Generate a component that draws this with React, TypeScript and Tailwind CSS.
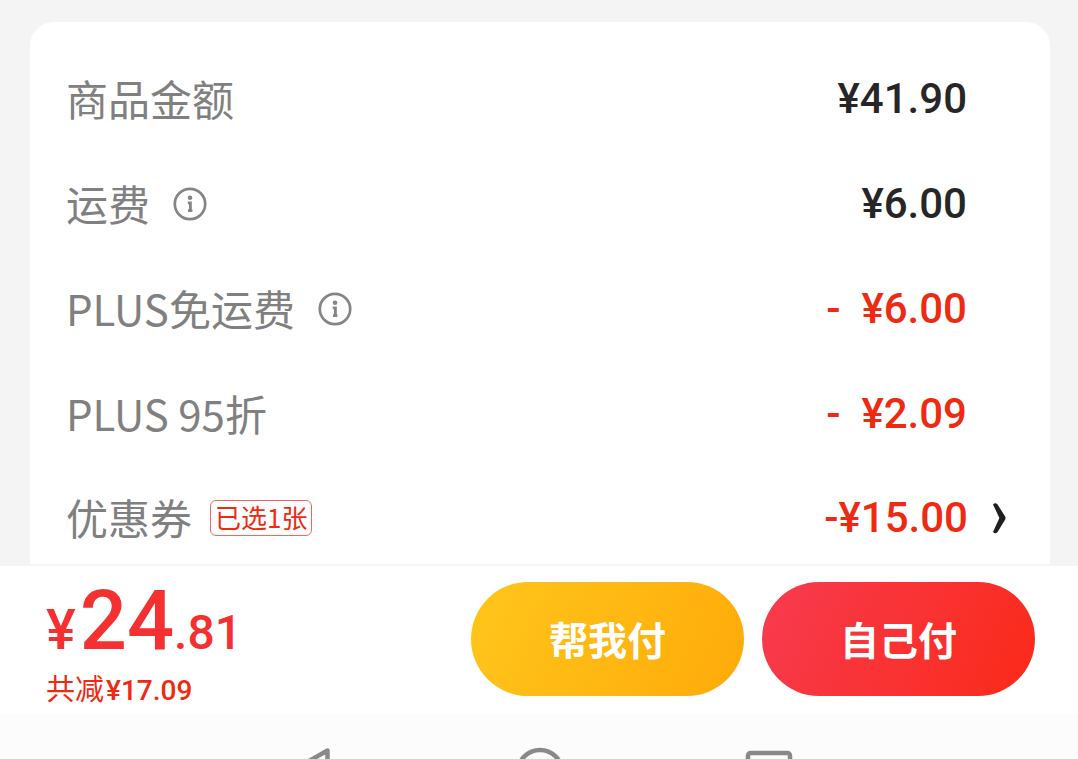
import type { ReactNode } from "react";

function InfoButton({ label }: { label: string }) {
  return (
    <button type="button" aria-label={label} className="ml-[23px] shrink-0">
      <svg viewBox="0 0 34 34" className="size-[34px]" fill="none" stroke="#858585">
        <circle cx="17" cy="17" r="15.2" strokeWidth="2.7" />
        <circle cx="17" cy="10.8" r="2.3" fill="#858585" stroke="none" />
        <path d="M14.8 15.8H17.4V23.4M15 23.6H19.4" strokeWidth="2.8" />
      </svg>
    </button>
  );
}

type RowProps = {
  label: string;
  amount: string;
  discount?: boolean;
  extra?: ReactNode;
};

function Row({ label, amount, discount = false, extra }: RowProps) {
  return (
    <li className="flex h-[105px] shrink-0 items-center justify-between pr-[83px]">
      <div className="flex items-center">
        <span className="pb-0.5 text-[42px] leading-[60px] text-[#808080]">{label}</span>
        {extra}
      </div>
      <span
        className={
          discount
            ? "font-[Roboto] text-[42px] leading-[60px] font-medium whitespace-pre text-[#ee2a12]"
            : "font-[Roboto] text-[42px] leading-[60px] font-medium whitespace-pre text-[#262626]"
        }
      >
        {amount}
      </span>
    </li>
  );
}

export default function App() {
  return (
    <div className="flex h-screen flex-col overflow-hidden bg-[#f4f4f4] font-['Noto_Sans_CJK_SC',sans-serif]">
      <main className="min-h-0 flex-1 overflow-hidden pt-[22px] pr-7 pl-[30px]">
        <ul className="flex h-full flex-col overflow-hidden rounded-t-3xl bg-white pt-6 pl-9">
          <Row label="商品金额" amount="¥41.90" />
          <Row label="运费" amount="¥6.00" extra={<InfoButton label="运费说明" />} />
          <Row label="PLUS免运费" amount="-  ¥6.00" discount extra={<InfoButton label="免运费说明" />} />
          <Row label="PLUS 95折" amount="-  ¥2.09" discount />
          <li className="flex h-[103px] shrink-0 items-center justify-between pr-11">
            <div className="flex items-center">
              <span className="pb-0.5 text-[42px] leading-[60px] text-[#808080]">优惠券</span>
              <span className="ml-[18px] rounded-md border border-[#ee6a60] px-1 pb-0.5 text-[26px] leading-8 text-[#ee2a12]">
                已选1张
              </span>
            </div>
            <button type="button" aria-label="选择优惠券" className="flex items-center gap-6">
              <span className="font-[Roboto] text-[42px] leading-[60px] font-medium text-[#ee2a12]">-¥15.00</span>
              <svg viewBox="0 0 14 32" className="h-8 w-[14px]" fill="#1f1f1f">
                <path d="M1 2.4Q3.4 0 5.6 2.6L13.2 14.6Q13.8 16 13.2 17.4L5.6 30Q3.2 32.4 1 30L7.4 16Z" />
              </svg>
            </button>
          </li>
        </ul>
      </main>

      <footer className="flex h-[150px] shrink-0 items-center justify-between border-t-2 border-[#f4f4f4] bg-white pr-[43px] pb-0.5 pl-[46px]">
        <div className="pt-3.5">
          <p className="flex items-baseline font-[Roboto] font-medium text-[#f53030]">
            <span className="mr-1 text-[56px] leading-none">¥</span>
            <span className="text-[83px] leading-[80px]">24</span>
            <span className="text-[48px] leading-none">.81</span>
          </p>
          <p className="mt-1.5 text-[29px] leading-10 text-[#ee2a12]">
            共减<span className="ml-0.5 font-[Roboto] text-[28px] font-medium">¥17.09</span>
          </p>
        </div>
        <div className="flex gap-[18px]">
          <button
            type="button"
            className="h-[114px] w-[273px] rounded-full bg-linear-[115deg,#ffc61c,#ffaa08] pb-0.5 text-[39px] font-bold text-white"
          >
            帮我付
          </button>
          <button
            type="button"
            className="h-[114px] w-[273px] rounded-full bg-linear-[115deg,#f73b50,#fb2a18] pb-0.5 text-[39px] font-bold text-white"
          >
            自己付
          </button>
        </div>
      </footer>

      <nav className="flex h-[45px] shrink-0 items-start justify-center gap-44 overflow-hidden bg-[#fcfcfc] pt-8 pl-0.5">
        <button type="button" aria-label="返回">
          <svg viewBox="0 0 52 52" className="size-[52px]" fill="none" stroke="#898989">
            <path d="M41.5 4.5L2 27L41.5 49.5Z" strokeWidth="4.5" strokeLinejoin="round" />
          </svg>
        </button>
        <button type="button" aria-label="主页">
          <svg viewBox="0 0 52 52" className="size-[52px]" fill="none" stroke="#898989">
            <circle cx="26" cy="26" r="22" strokeWidth="4.5" />
          </svg>
        </button>
        <button type="button" aria-label="最近任务">
          <svg viewBox="0 0 52 52" className="size-[52px]" fill="none" stroke="#898989">
            <rect x="6" y="7" width="42" height="40" rx="2.5" strokeWidth="4.5" />
          </svg>
        </button>
      </nav>
    </div>
  );
}
